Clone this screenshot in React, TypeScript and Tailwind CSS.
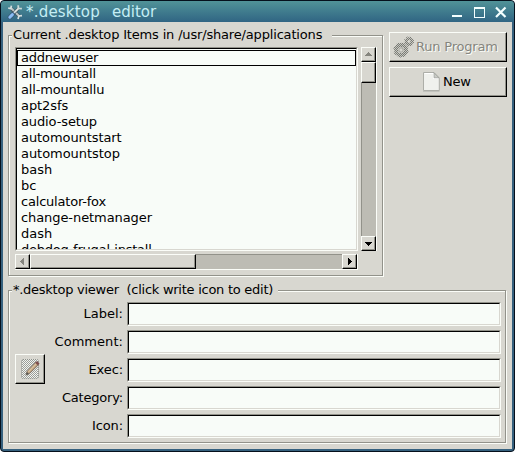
import React from "react";

const items: [string, string][] = [
  ["addnewuser", "tracking-[-0.25px]"],
  ["all-mountall", "tracking-[-0.2px]"],
  ["all-mountallu", "tracking-[-0.17px]"],
  ["apt2sfs", "tracking-[-0.07px]"],
  ["audio-setup", "tracking-[-0.12px]"],
  ["automountstart", "tracking-[-0.08px]"],
  ["automountstop", "tracking-[-0.05px]"],
  ["bash", "tracking-[0px]"],
  ["bc", "tracking-[0px]"],
  ["calculator-fox", "tracking-[-0.2px]"],
  ["change-netmanager", "tracking-[-0.08px]"],
  ["dash", "tracking-[0px]"],
  ["debdog-frugal-install", "tracking-[-0.22px]"],
];

const fields: [string, string][] = [
  ["Label:", "tracking-[0px]"],
  ["Comment:", "tracking-[0.05px]"],
  ["Exec:", "tracking-[-0.1px]"],
  ["Category:", "tracking-[-0.2px]"],
  ["Icon:", "tracking-[-0.1px]"],
];

const raised =
  "border border-t-[#fbfdf8] border-l-[#fbfdf8] border-r-black border-b-black bg-[#d8d7d0] shadow-[inset_-1px_-1px_0_#92928a]";
const sunken =
  "border-t border-l border-t-[#92928a] border-l-[#92928a] border-r border-b border-r-[#fbfdf8] border-b-[#fbfdf8]";

function Arrow({ d, color }: { d: string; color: string }) {
  return (
    <svg width="13" height="13" viewBox="0 0 13 13" shapeRendering="crispEdges">
      <path d={d} fill={color} />
    </svg>
  );
}

function ScrollButton({ d, color }: { d: string; color: string }) {
  return (
    <div className={`h-[15px] w-[15px] shrink-0 ${raised}`}>
      <Arrow d={d} color={color} />
    </div>
  );
}

function Group({ title, className, legendClass, children }: { title: string; className: string; legendClass: string; children: React.ReactNode }) {
  return (
    <section className={`relative border border-[#92928a] shadow-[inset_1px_1px_0_#fbfdf8,1px_1px_0_#fbfdf8] ${className}`}>
      <h2 className={`absolute -top-[9px] h-4 whitespace-pre bg-[#d8d7d0] leading-4 ${legendClass}`}>{title}</h2>
      {children}
    </section>
  );
}

function Tools() {
  return (
    <svg width="16" height="16" viewBox="0 0 16 16" fill="none">
      <path d="M4 4.5L13 13" stroke="#41535d" strokeWidth="3.4" />
      <path d="M4 4L12.5 12.5" stroke="#b9c5c5" strokeWidth="1.9" />
      <path d="M1.2 4L3.8 4.6L4.4 1.6M11 15L11.9 12L15 11.6" stroke="#d5dfdf" strokeWidth="1.7" />
      <path d="M6.5 9.5L11.5 4.5" stroke="#41535d" strokeWidth="3" />
      <path d="M6.5 9.3L11.5 4.3" stroke="#e2e9e5" strokeWidth="1.7" />
      <path d="M11.2 1.2L11.4 4.4L14.9 4.6" stroke="#cdd8d6" strokeWidth="1.8" />
      <path d="M2.8 13.2L5.6 10.4" stroke="#375775" strokeWidth="4.4" strokeLinecap="round" />
      <path d="M2.8 13.2L5.4 10.6" stroke="#8bbdf5" strokeWidth="3" strokeLinecap="round" />
    </svg>
  );
}

function Gears() {
  return (
    <svg width="22" height="22" viewBox="0 0 22 22" fill="none">
      <defs>
        <pattern id="gray-check" width="2" height="2" patternUnits="userSpaceOnUse">
          <path d="M0 0h1v1H0zM1 1h1v1H1z" fill="#787973" shapeRendering="crispEdges" />
        </pattern>
      </defs>
      <circle cx="8" cy="14" r="5" stroke="#c6c7c0" strokeWidth="3.4" />
      <circle cx="8" cy="14" r="5" stroke="url(#gray-check)" strokeWidth="3.8" />
      <circle cx="8" cy="14" r="6.9" stroke="url(#gray-check)" strokeWidth="1.5" strokeDasharray="3 2.5" />
      <circle cx="8" cy="14" r="2.2" stroke="#a0a19a" />
      <circle cx="16" cy="5.5" r="2.8" stroke="#c6c7c0" strokeWidth="2.4" />
      <circle cx="16" cy="5.5" r="2.8" stroke="url(#gray-check)" strokeWidth="2.8" />
      <circle cx="16" cy="5.5" r="4.3" stroke="url(#gray-check)" strokeWidth="1.4" strokeDasharray="2 1.4" />
    </svg>
  );
}

function PageIcon() {
  return (
    <svg width="18" height="20" viewBox="0 0 18 20">
      <path d="M1.5.5H12L17.3 6V18.5H1.5Z" fill="#f0f1ed" stroke="#adaea8" />
      <path d="M2.5 1.5H11.5V6.5H16.3" fill="none" stroke="#fff" />
      <path d="M12 .8V5.8H17Z" fill="#c9cbc6" stroke="#999b95" strokeWidth=".7" />
      <path d="M1 19.5H17.5" stroke="#c1c2bc" />
    </svg>
  );
}

function WriteIcon() {
  return (
    <svg width="20" height="22" viewBox="0 0 20 22">
      <defs>
        <pattern id="paper-check" width="2" height="2" patternUnits="userSpaceOnUse">
          <path d="M0 0h2v2H0z" fill="#f2f4f0" />
          <path d="M0 0h1v1H0zM1 1h1v1H1z" fill="#9b9e9a" shapeRendering="crispEdges" />
        </pattern>
      </defs>
      <rect x="1.5" y="1.5" width="17" height="19" rx="1.5" fill="url(#paper-check)" stroke="#8e918c" strokeDasharray="1 1" />
      <path d="M6 17L7.2 13.2L15.8 4.2L18.5 6.8L9.5 15.6Z" fill="#b99c7d" stroke="#75685d" strokeWidth=".8" />
      <path d="M8.3 14L16 6" stroke="#dbc4a0" strokeWidth="1.2" />
      <path d="M15.3 4.7L17 3L19.5 5.4L17.9 7.2Z" fill="#7d4c4c" />
      <path d="M6 17L7 14.2L8.8 15.8Z" fill="#515450" />
    </svg>
  );
}

export default function App() {
  return (
    <main className="flex h-[452px] w-[515px] flex-col overflow-hidden rounded-[4px] border border-[#05101c] bg-[#36617e] text-[13px] text-black [font-family:'DejaVu_Sans',sans-serif]">
      <header className="flex h-[21px] shrink-0 items-center rounded-t-[3px] bg-linear-to-b from-[#519398] to-[#306583] pl-[6px] pr-[5px] text-[#c5eef5]">
        <Tools />
        <h1 className="ml-[3px] flex text-[15px] leading-[20px]">
          <span className="w-[86px] tracking-[0.2px]">*.desktop</span>
          <span>editor</span>
        </h1>
        <svg className="ml-auto" width="58" height="20" viewBox="0 0 58 20" fill="none" stroke="#f4ffff">
          <path d="M1 14H11" strokeWidth="2" shapeRendering="crispEdges" />
          <path d="M23.5 6V15.5H33.5V6" shapeRendering="crispEdges" />
          <path d="M23 6H34" strokeWidth="2" shapeRendering="crispEdges" />
          <path d="M45 5.5L54.5 15M54.5 5.5L45 15" strokeWidth="2.2" />
        </svg>
      </header>
      <div className="mx-[2px] mb-[2px] min-h-0 flex-1 bg-[#d8d7d0] pl-[5px] pt-[10px]">
        <div className="flex h-[255px]">
          <Group title="Current .desktop Items in /usr/share/applications" className="mt-[3px] h-[241px] w-[375px] pl-[6px] pt-[11px]" legendClass="left-[3px] w-[320px] pl-px tracking-[-0.17px]">
            <div className="flex gap-[3px]">
              <div className={`h-[204px] w-[343px] ${sunken}`}>
                <div className="h-[202px] overflow-hidden border border-t-black border-l-black border-r-[#d8d7d0] border-b-[#d8d7d0] bg-[#f8fcf8] pt-px">
                  {items.map(([name, tracking], index) => (
                    <div key={name} className={`flex h-4 items-center pl-1 ${index === 0 ? "outline outline-1 -outline-offset-1 outline-black" : ""}`}>
                      <span className={`whitespace-nowrap leading-4 ${tracking}`}>{name}</span>
                    </div>
                  ))}
                </div>
              </div>
              <div className="flex h-[204px] w-[16px] flex-col border-r border-r-[#fbfdf8] bg-[#bdbcb4]">
                <ScrollButton d="M3 8H10V7H9V6H8V5H7V4H6V5H5V6H4V7H3Z" color="#85857e" />
                <div className={`h-[21px] w-[15px] ${raised}`} />
                <div className="flex-1 border-l border-[#92928a]" />
                <ScrollButton d="M3 5H10V6H9V7H8V8H7V9H6V8H5V7H4V6H3Z" color="#000" />
              </div>
            </div>
            <div className="mt-[3px] flex h-[16px] w-[343px] border-b border-r border-[#fbfdf8] bg-[#bdbcb4]">
              <ScrollButton d="M8 3V10H7V9H6V8H5V7H4V6H5V5H6V4H7V3Z" color="#85857e" />
              <div className={`h-[15px] w-[166px] ${raised}`} />
              <div className="flex-1 border-t border-[#92928a]" />
              <ScrollButton d="M5 3V10H6V9H7V8H8V7H9V6H8V5H7V4H6V3Z" color="#000" />
            </div>
          </Group>
          <aside className="ml-[6px] flex flex-col gap-[5px]">
            <button disabled className={`flex h-[30px] w-[118px] items-center pl-[3px] text-[#85857e] [text-shadow:1px_1px_0_#fbfdf8] ${raised}`}>
              <Gears />
              <span className="ml-[1px] whitespace-nowrap tracking-[-0.2px]">Run Program</span>
            </button>
            <button className={`flex h-[30px] w-[118px] items-center pl-[32px] ${raised}`}>
              <PageIcon />
              <span className="ml-[3px] tracking-[-0.2px]">New</span>
            </button>
          </aside>
        </div>
        <Group title="*.desktop viewer  (click write icon to edit)" className="mt-[3px] h-[153px] w-[498px]" legendClass="left-[3px] w-[266px] pl-px tracking-[-0.26px]">
          <div className="flex pl-[6px] pt-[11px]">
            <button className={`mt-[52px] flex h-[30px] w-[30px] shrink-0 items-center justify-center ${raised}`}>
              <WriteIcon />
            </button>
            <div className="flex flex-col gap-1">
              {fields.map(([label, tracking]) => (
                <label key={label} className="flex h-6 items-center">
                  <span className={`w-[78px] text-right leading-4 ${tracking}`}>{label}</span>
                  <span className={`ml-[4px] h-6 w-[374px] ${sunken}`}>
                    <input aria-label={label} className="block h-[22px] w-full border border-t-black border-l-black border-r-[#d8d7d0] border-b-[#d8d7d0] bg-[#f8fcf8] outline-none" />
                  </span>
                </label>
              ))}
            </div>
          </div>
        </Group>
      </div>
    </main>
  );
}
